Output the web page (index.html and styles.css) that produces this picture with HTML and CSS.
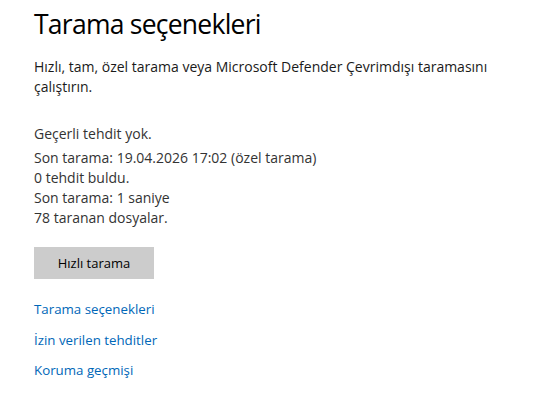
FILE: index.html
```html
<!DOCTYPE html>
<html lang="tr">
<head>
<meta charset="utf-8">
<link rel="stylesheet" href="styles.css">
</head>
<body>
<main class="page">
  <h1 class="title">Tarama seçenekleri</h1>
  <p class="intro">Hızlı, tam, özel tarama veya Microsoft Defender Çevrimdışı taramasını çalıştırın.</p>
  <div class="status">
    <p class="status-head">Geçerli tehdit yok.</p>
    <p class="status-line">Son tarama: 19.04.2026 17:02 (özel tarama)</p>
    <p class="status-line">0 tehdit buldu.</p>
    <p class="status-line">Son tarama: 1 saniye</p>
    <p class="status-line">78 taranan dosyalar.</p>
  </div>
  <button class="btn" type="button">Hızlı tarama</button>
  <nav class="links">
    <a class="link" href="#">Tarama seçenekleri</a>
    <a class="link" href="#">İzin verilen tehditler</a>
    <a class="link" href="#">Koruma geçmişi</a>
  </nav>
</main>
</body>
</html>
```
FILE: styles.css
```css
html, body {
  margin: 0;
  padding: 0;
  background: #ffffff;
}
body {
  font-family: "Open Sans", "Noto Sans", sans-serif;
  color: #1a1a1a;
}
.page {
  padding: 6px 34px 0 34px;
  display: flex;
  flex-direction: column;
  align-items: flex-start;
}
.title {
  margin: 0;
  font-size: 26.5px;
  font-weight: 400;
  line-height: 36px;
  color: #000;
  letter-spacing: -0.75px;
}
.intro {
  margin: 15px 0 0 0;
  font-size: 14px;
  line-height: 20px;
  max-width: 480px;
  color: #1a1a1a;
}
.status {
  margin-top: 27px;
  display: flex;
  flex-direction: column;
}
.status p {
  margin: 0;
  font-size: 14px;
  line-height: 20px;
  color: #333;
}
.status-head {
  margin-bottom: 4px !important;
}
.btn {
  margin-top: 19px;
  width: 120px;
  height: 32px;
  border: none;
  background: #cccccc;
  font-family: inherit;
  font-size: 13px;
  color: #000;
  padding: 0;
}
.links {
  margin-top: 20px;
  display: flex;
  flex-direction: column;
  gap: 10.5px;
}
.link {
  font-size: 13.3px;
  line-height: 20px;
  color: #0067b8;
  text-decoration: none;
}
```
